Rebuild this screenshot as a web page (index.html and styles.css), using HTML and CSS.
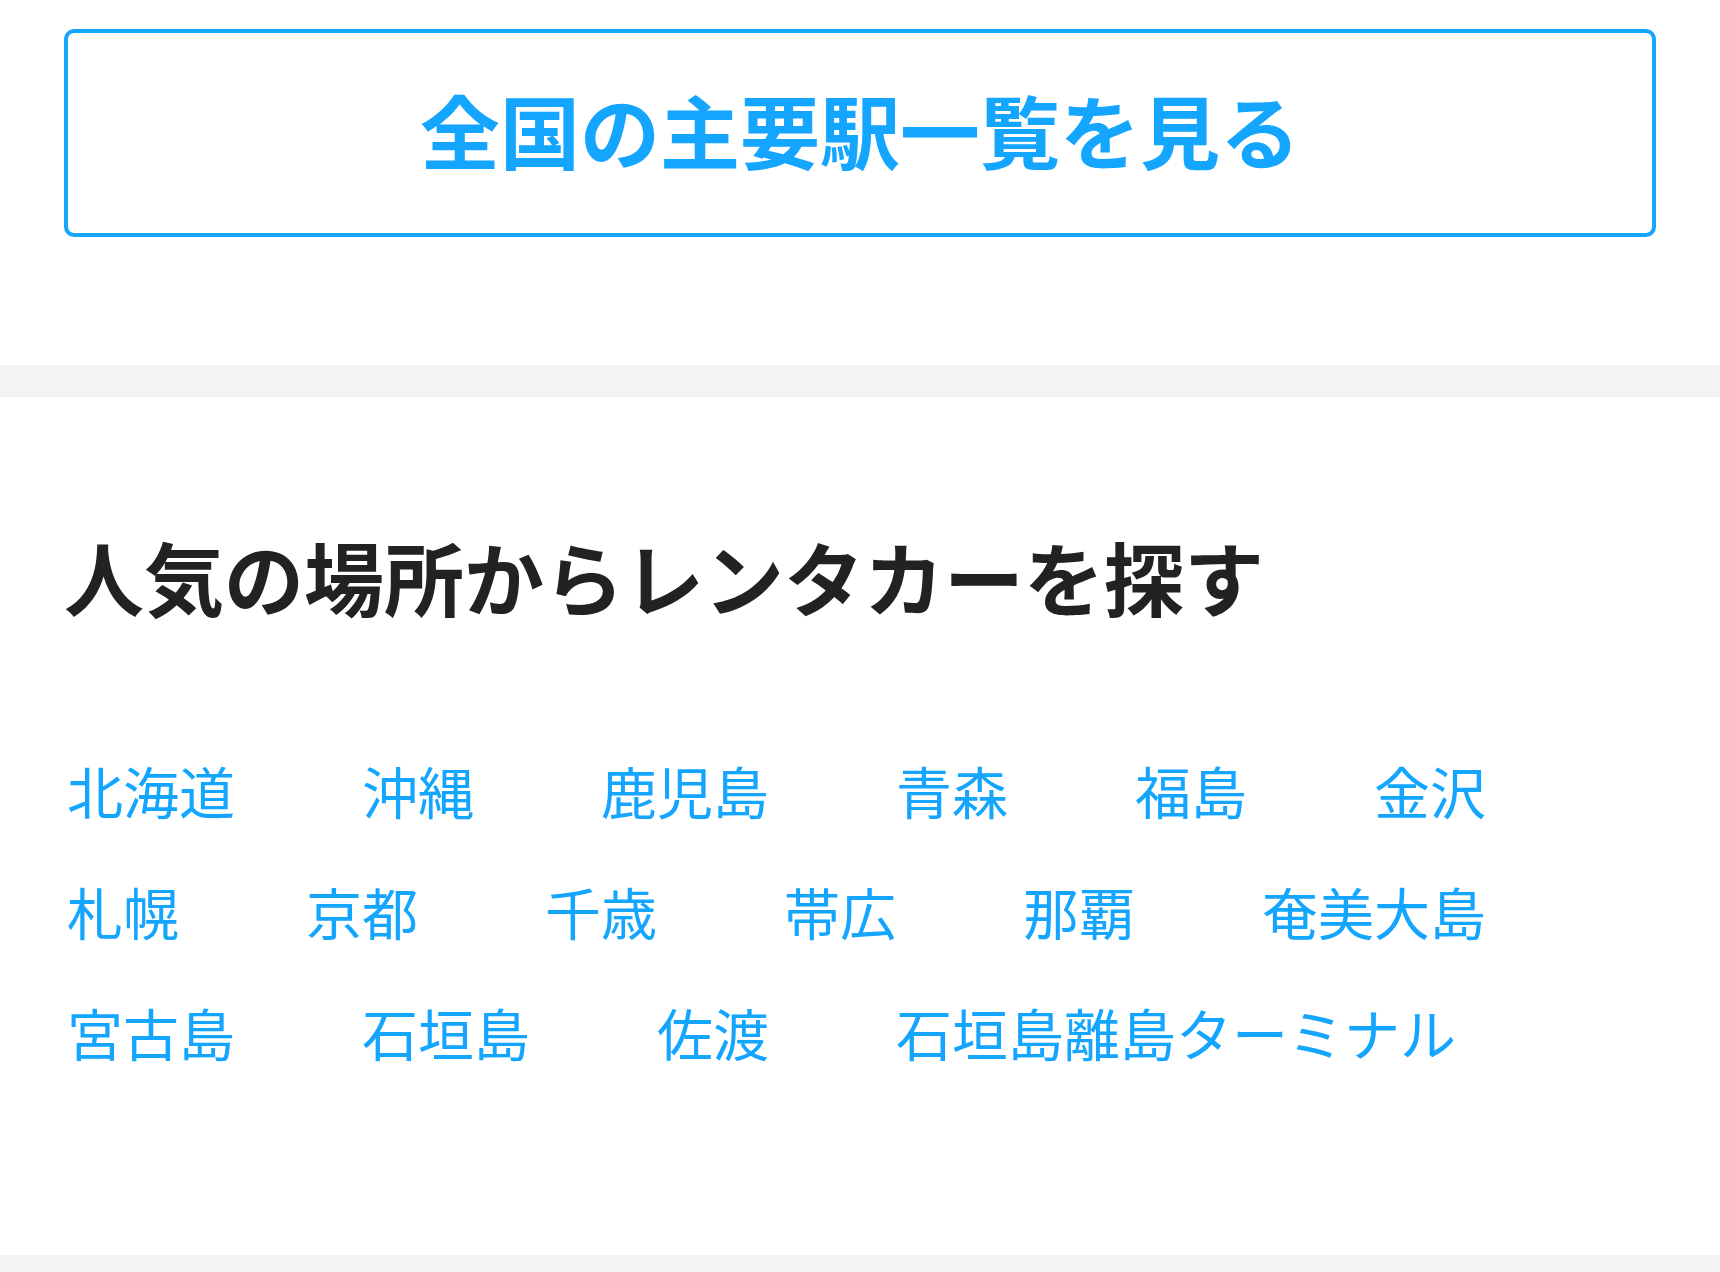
FILE: index.html
```html
<!DOCTYPE html>
<html lang="ja">
<head>
  <meta charset="UTF-8" />
  <meta name="viewport" content="width=device-width, initial-scale=1" />
  <title>レンタカーを探す</title>
  <link rel="stylesheet" href="styles.css">
</head>
<body>
  <section class="block block-stations">
    <a href="#" class="station-button">全国の主要駅一覧を見る</a>
  </section>

  <section class="block block-popular">
    <h2>人気の場所からレンタカーを探す</h2>
    <ul class="place-list">
      <li><a href="#">北海道</a></li>
      <li><a href="#">沖縄</a></li>
      <li><a href="#">鹿児島</a></li>
      <li><a href="#">青森</a></li>
      <li><a href="#">福島</a></li>
      <li><a href="#">金沢</a></li>
      <li><a href="#">札幌</a></li>
      <li><a href="#">京都</a></li>
      <li><a href="#">千歳</a></li>
      <li><a href="#">帯広</a></li>
      <li><a href="#">那覇</a></li>
      <li><a href="#">奄美大島</a></li>
      <li><a href="#">宮古島</a></li>
      <li><a href="#">石垣島</a></li>
      <li><a href="#">佐渡</a></li>
      <li><a href="#">石垣島離島ターミナル</a></li>
    </ul>
  </section>
</body>
</html>
```

FILE: styles.css
```css
body {
  margin: 0;
  background-color: #f3f3f3;
  font-family: 'Noto Sans CJK JP', 'Noto Sans', sans-serif;
  color: #222222;
}
.block {
  background-color: #ffffff;
  padding: 0 64px;
  margin-bottom: 32px;
}
.block-stations {
  padding-top: 29px;
  padding-bottom: 128px;
}
.station-button {
  display: flex;
  align-items: center;
  justify-content: center;
  height: 208px;
  box-sizing: border-box;
  padding-bottom: 11px;
  border: 4px solid #14a5ff;
  border-radius: 10px;
  color: #14a5ff;
  font-size: 80px;
  font-weight: bold;
  text-decoration: none;
  line-height: 1.2;
}
.block-popular {
  padding-top: 118px;
  padding-bottom: 182px;
  margin-bottom: 0;
  border-bottom: 19px solid #f3f3f3;
}
h2 {
  margin: 0 0 113px;
  font-size: 80px;
  font-weight: bold;
  line-height: 120px;
}
.place-list {
  list-style: none;
  margin: 0;
  padding: 0 0 0 3px;
  display: flex;
  flex-wrap: wrap;
  column-gap: 127px;
  row-gap: 38px;
}
.place-list a {
  color: #14a5ff;
  font-size: 56px;
  line-height: 83px;
  text-decoration: none;
}
```
